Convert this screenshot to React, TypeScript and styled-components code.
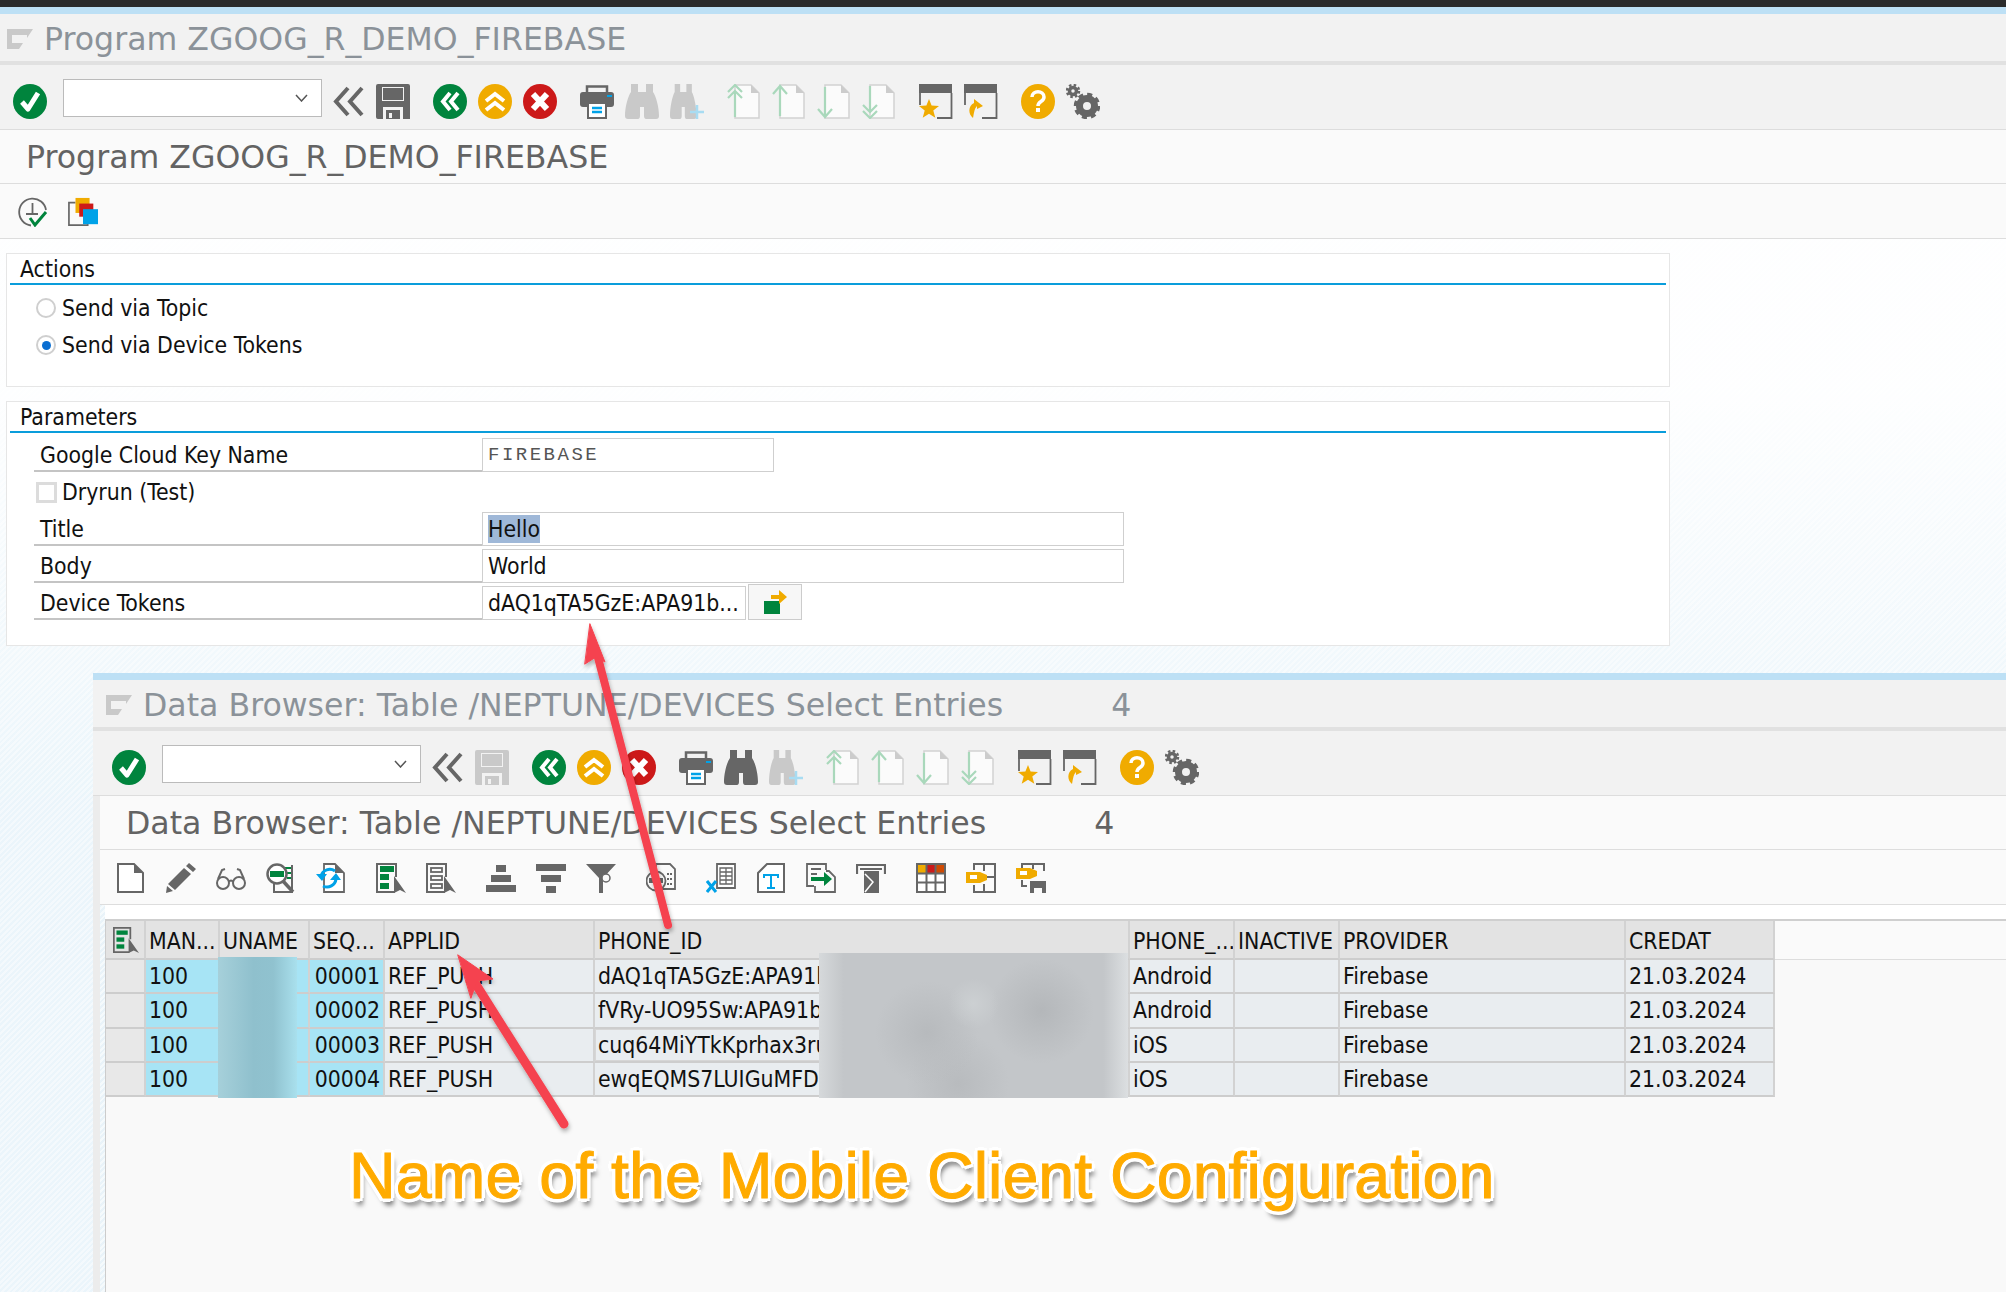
import * as React from 'react'
import styled, { createGlobalStyle } from 'styled-components'

const GRAY = '#666666'
const DISABLED = '#c9c9c9'
const GREEN = '#00843d'
const ORANGE = '#f0ab00'
const RED = '#cc1919'
const BLUE = '#00a2e8'

const GlobalStyle = createGlobalStyle`
  html, body {
    margin: 0;
    padding: 0;
    background: #fff;
  }

  * {
    box-sizing: border-box;
  }
`

const Page = styled.div`
  position: relative;
  display: flex;
  flex-direction: column;
  width: 2006px;
  height: 1292px;
  overflow: hidden;
  font-family: 'DejaVu Sans Condensed', 'DejaVu Sans', sans-serif;
  font-stretch: condensed;
  font-size: 22.8px;
  color: #111;
  background:
    linear-gradient(to bottom, rgba(255, 255, 255, 0.94) 30%, rgba(255, 255, 255, 0.2) 62%),
    repeating-linear-gradient(135deg, #e6f3fa 0 2px, #f1f8fc 2px 4px);
`

const TopBar = styled.div`
  flex: none;
  height: 7px;
  background: #2b2b2b;
`

const HeaderBox = styled.div<{ $indent: number }>`
  flex: none;
  display: flex;
  flex-direction: column;
  border-top: 7px solid #bde0f5;

  .title__row {
    margin-left: ${({ $indent }) => $indent}px;
  }
`

const TitleBar = styled.div<{ $start: number }>`
  display: flex;
  align-items: center;
  height: 51px;
  padding: 2px 0 0 ${({ $start }) => $start}px;
  gap: 11px;
  background: #f2f2f2;
  border-bottom: 4px solid #e1e1e1;
  font-family: 'DejaVu Sans', sans-serif;
  font-stretch: normal;
  font-size: 31.6px;
  color: #8b9299;
  white-space: pre;
`

const TitleIcon = styled.svg`
  flex: none;
  width: 26px;
  height: 20px;
`

const CountText = styled.span<{ $gap: number }>`
  margin-left: ${({ $gap }) => $gap}px;
`

const SystemBar = styled.div<{ $start: number }>`
  display: flex;
  align-items: center;
  height: 65px;
  padding: 2px 0 0 ${({ $start }) => $start}px;
  gap: 23px;
  background: #f2f2f2;
  border-bottom: 1px solid #dddddd;
`

const CommandBox = styled.div`
  display: flex;
  align-items: center;
  justify-content: flex-end;
  width: 259px;
  height: 38px;
  margin: 0 -14px 0 -7px;
  padding-right: 13px;
  background: #fff;
  border: 1px solid #bbbbbb;
`

const ToolGroup = styled.div`
  display: flex;
  align-items: center;
  gap: 11px;
`

const ScreenTitle = styled.div`
  display: flex;
  align-items: center;
  height: 54px;
  padding: 1px 0 0 26px;
  background: #fafafa;
  border-bottom: 1px solid #dddddd;
  font-family: 'DejaVu Sans', sans-serif;
  font-stretch: normal;
  font-size: 31.6px;
  color: #636363;
  white-space: pre;
`

const AppBar = styled.div<{ $gap: number; $start: number }>`
  display: flex;
  align-items: center;
  height: 55px;
  padding: 2px 0 0 ${({ $start }) => $start}px;
  gap: ${({ $gap }) => $gap}px;
  background: #fafafa;
  border-bottom: 1px solid #dddddd;
`

const AppGroup = styled.div`
  display: flex;
  align-items: center;
  gap: 20px;
`

const SysIcon = styled.svg`
  flex: none;
  width: 34px;
  height: 35px;
  margin-top: 7px;
`

const AppIcon = styled.svg<{ $size?: number }>`
  flex: none;
  width: ${({ $size }) => $size ?? 30}px;
  height: ${({ $size }) => $size ?? 30}px;
`

const Selection = styled.div`
  flex: none;
  height: 434px;
  padding: 14px 0 0 6px;
`

const Panel = styled.section<{ $height: number }>`
  width: 1664px;
  height: ${({ $height }) => $height}px;
  margin-bottom: 14px;
  padding: 0 3px;
  background: #fff;
  border: 1px solid #e6e6e6;
`

const PanelHead = styled.div`
  display: flex;
  align-items: center;
  height: 31px;
  padding-left: 10px;
  border-bottom: 2px solid #0a9ddb;
`

const OptionRow = styled.div`
  display: flex;
  align-items: center;
  gap: 6px;
  height: 37px;
  padding: 1px 0 0 26px;
`

const OptionList = styled.div`
  padding-top: 4px;
`

const Radio = styled.span<{ $on?: boolean }>`
  display: flex;
  align-items: center;
  justify-content: center;
  width: 20px;
  height: 20px;
  border: 2px solid #cfcfcf;
  border-radius: 50%;
  background: #fff;

  &::after {
    content: '';
    display: ${({ $on }) => ($on ? 'block' : 'none')};
    width: 9px;
    height: 9px;
    border-radius: 50%;
    background: #0a6ed1;
  }
`

const Checkbox = styled.span`
  width: 21px;
  height: 21px;
  margin-right: -1px;
  border: 3px solid #dcdcdc;
  background: #fff;
`

const ParamList = styled.div`
  padding-top: 3px;
`

const ParamRow = styled.div`
  display: flex;
  height: 37px;
  padding-left: 24px;
`

const ParamLabel = styled.div`
  display: flex;
  align-items: center;
  width: 448px;
  height: 36px;
  padding: 4px 0 0 6px;
  border-bottom: 2px solid #c4c4c4;
`

const ParamField = styled.div<{ $width: number; $frozen?: boolean }>`
  display: flex;
  align-items: center;
  width: ${({ $width }) => $width}px;
  height: 34px;
  margin-top: 2px;
  padding-left: 5px;
  background: #fff;
  border: 1px solid #cfcfcf;
  overflow: hidden;
  white-space: nowrap;
  font-family: ${({ $frozen }) => ($frozen ? "'Liberation Mono', monospace" : 'inherit')};
  font-size: ${({ $frozen }) => ($frozen ? '19px' : '22.8px')};
  letter-spacing: ${({ $frozen }) => ($frozen ? '2.5px' : '0')};
  color: ${({ $frozen }) => ($frozen ? '#555' : '#111')};
`

const Selected = styled.span`
  padding: 1px 0;
  background: #9fb8d8;
`

const PickerButton = styled.div`
  display: flex;
  align-items: center;
  justify-content: center;
  width: 54px;
  height: 36px;
  margin-left: 2px;
  background: #f7f7f7;
  border: 1px solid #cccccc;
`

const Browser = styled.div`
  flex: 1;
  display: flex;
  flex-direction: column;
  margin-left: 93px;
  background: #ececec;
`

const BrowserBody = styled.div`
  flex: 1;
  display: flex;
  flex-direction: column;
  margin-left: 7px;
  padding-left: 5px;
  background: repeating-linear-gradient(135deg, #e9f3f9 0 2px, #f5fafc 2px 4px);
`

const ListArea = styled.div`
  position: relative;
  flex: 1;
  background: #f9f9f9;
  border-left: 1px solid #cccccc;
`

const Spacer = styled.div`
  height: 16px;
  background: #fff;
  border-bottom: 2px solid #cfcfcf;
  margin-left: -1px;
`

const Grid = styled.div`
  display: grid;
  grid-template-columns: 40px 74px 90px 75px 210px 535px 105px 105px 286px 149px 1fr;
  grid-template-rows: 39px repeat(4, 34.25px);
`

const CELL_COLORS = {
  head: '#e3e3e3',
  corner: '#e3e3e3',
  selector: '#e8e8e8',
  key: '#a7e4f5',
  data: '#e9edf0',
}

const Cell = styled.div<{ $kind: keyof typeof CELL_COLORS; $end?: boolean; $focus?: boolean }>`
  display: flex;
  align-items: center;
  justify-content: ${({ $end }) => ($end ? 'flex-end' : 'flex-start')};
  padding: ${({ $kind }) => ($kind === 'head' ? '3px' : '0')} ${({ $end }) => ($end ? '3px' : '0')} 0
    ${({ $end }) => ($end ? '0' : '3px')};
  overflow: hidden;
  white-space: nowrap;
  background: ${({ $kind }) => CELL_COLORS[$kind]};
  border-right: 2px solid #d2d2d2;
  border-bottom: 2px solid #cdcdcd;
  box-shadow: ${({ $focus }) => ($focus ? 'inset 0 0 0 1px #d6d6d6' : 'none')};
`

const HeadFiller = styled.div`
  border-bottom: 1px solid #dddddd;
  background: #fafafa;
`

const CornerIcon = styled.div`
  display: flex;
  justify-content: center;
  width: 100%;
  margin-left: -1px;
`

const BlurPatch = styled.div<{ $left: number; $top: number; $width: number; $height: number; $bg: string }>`
  position: absolute;
  left: ${({ $left }) => $left}px;
  top: ${({ $top }) => $top}px;
  width: ${({ $width }) => $width}px;
  height: ${({ $height }) => $height}px;
  background: ${({ $bg }) => $bg};
`

const Callout = styled.div`
  position: absolute;
  left: 349px;
  top: 1139px;
  font-family: 'Liberation Sans', Arial, sans-serif;
  font-stretch: normal;
  font-size: 64.6px;
  line-height: 74px;
  white-space: nowrap;
  color: #ffab00;
  -webkit-text-stroke: 1px #ffab00;
  text-shadow:
    4px 0 0 #fff, -4px 0 0 #fff, 0 4px 0 #fff, 0 -4px 0 #fff,
    3px 3px 0 #fff, -3px 3px 0 #fff, 3px -3px 0 #fff, -3px -3px 0 #fff,
    3px 7px 5px rgba(0, 0, 0, 0.55);
`

const ArrowLayer = styled.svg`
  position: absolute;
  left: 0;
  top: 0;
  width: 2006px;
  height: 1292px;
  pointer-events: none;
`

const Check = () => (
  <SysIcon viewBox="0 0 34 35">
    <ellipse cx="17" cy="17.5" rx="17" ry="17.5" fill={GREEN} />
    <path d="M9 18l6 7L25 9" fill="none" stroke="#fff" strokeWidth="5" strokeLinejoin="round" />
  </SysIcon>
)

const BackLines = () => (
  <SysIcon viewBox="0 0 34 35">
    <path d="M17 4L5 17.5 17 31M31 4L19 17.5 31 31" fill="none" stroke={GRAY} strokeWidth="4" />
  </SysIcon>
)

const Save = ({ off }: { off?: boolean }) => (
  <SysIcon viewBox="0 0 34 35">
    <path
      d="M0 2a2 2 0 012-2h30a2 2 0 012 2v33h-7V23H7v12H2a2 2 0 01-2-2zM6 3v14h22V3zM10 26h14v9H10zM13 29v5h3v-5z"
      fill={off ? DISABLED : GRAY}
      fillRule="evenodd"
    />
    <rect x="7" y="4" width="20" height="12" fill={off ? DISABLED : GRAY} />
  </SysIcon>
)

const Dot = ({ color, children }: { color: string; children: React.ReactNode }) => (
  <SysIcon viewBox="0 0 34 35">
    <ellipse cx="17" cy="17.5" rx="17" ry="17.5" fill={color} />
    {children}
  </SysIcon>
)

const Printer = () => (
  <SysIcon viewBox="0 0 34 35">
    <path d="M7 9V2.5h20V9" fill="none" stroke={GRAY} strokeWidth="2.5" />
    <rect x="0" y="8" width="34" height="15" rx="3" fill={GRAY} />
    <rect x="27" y="11" width="5" height="2" fill={BLUE} />
    <rect x="8" y="19" width="18" height="15" fill="#fff" stroke={GRAY} strokeWidth="2" />
    <path d="M12 24h10M12 28h10" stroke={BLUE} strokeWidth="2.5" />
  </SysIcon>
)

const BINOCULAR =
  'M6 0h7v8h8V0h7v8c3 4 6 15 6 24 0 2-1 3-3 3H21c-1 0-2-1-2-3v-9h-4v9c0 2-1 3-2 3H3c-2 0-3-1-3-3 0-9 3-20 6-24z'

const Binoculars = ({ off }: { off?: boolean }) => (
  <SysIcon viewBox="0 0 34 35">
    <path d={BINOCULAR} fill={off ? DISABLED : GRAY} />
  </SysIcon>
)

const BinocularsPlus = () => (
  <SysIcon viewBox="0 0 34 35">
    <path d={BINOCULAR} fill={DISABLED} transform="scale(0.78 1)" />
    <path d="M20 28h14M27 21v14" stroke="#a8dcf2" strokeWidth="2.5" />
  </SysIcon>
)

const PageMove = ({ kind }: { kind: 'first' | 'prev' | 'next' | 'last' }) => (
  <SysIcon viewBox="0 0 34 35">
    <path d="M8 1h16l8 8v25H8z" fill="#fbfbfb" stroke="#d2d2d2" strokeWidth="1.5" />
    <path d="M24 1l8 8h-8z" fill="#cccccc" />
    {kind === 'first' && (
      <path d="M8 33V8M1 14l7-7 7 7M1 8l7-7 7 7" fill="none" stroke="#a9d8bb" strokeWidth="2.2" />
    )}
    {kind === 'prev' && <path d="M8 32V3M1 10l7-8 7 8" fill="none" stroke="#a9d8bb" strokeWidth="2.2" />}
    {kind === 'next' && <path d="M8 3v29M1 25l7 8 7-8" fill="none" stroke="#a9d8bb" strokeWidth="2.2" />}
    {kind === 'last' && (
      <path d="M8 2v25M1 21l7 7 7-7M1 27l7 7 7-7" fill="none" stroke="#a9d8bb" strokeWidth="2.2" />
    )}
  </SysIcon>
)

const WindowFrame = ({ children }: { children: React.ReactNode }) => (
  <SysIcon viewBox="0 0 34 35">
    <rect x="0" y="0" width="33" height="9" fill={GRAY} />
    <path d="M1 9v12M32.5 9v25H18" fill="none" stroke={GRAY} strokeWidth="1.8" />
    {children}
  </SysIcon>
)

const Gears = () => (
  <SysIcon viewBox="0 0 34 35">
    <circle cx="21" cy="22" r="7.5" fill="none" stroke={GRAY} strokeWidth="7" />
    <circle cx="21" cy="22" r="11.5" fill="none" stroke={GRAY} strokeWidth="3.5" strokeDasharray="5 4" />
    <circle cx="7" cy="7" r="3.5" fill="none" stroke={GRAY} strokeWidth="3.5" />
    <circle cx="7" cy="7" r="6" fill="none" stroke={GRAY} strokeWidth="2.5" strokeDasharray="2.5 2.2" />
  </SysIcon>
)

const FlagIcon = () => (
  <TitleIcon viewBox="0 0 26 20">
    <path d="M0 0h26l-6 9H20V6H5v8h11l-4 6H0z" fill="#c9c9c9" />
  </TitleIcon>
)

const ExecuteIcon = () => (
  <AppIcon viewBox="0 0 30 30">
    <path d="M13 28.5A13.5 13.5 0 1 1 28 13" fill="none" stroke={GRAY} strokeWidth="1.8" />
    <path d="M14.5 6v11M8 17h12" stroke={GRAY} strokeWidth="1.8" />
    <path d="M12 21l5 7 11-13" fill="none" stroke={GREEN} strokeWidth="3" />
  </AppIcon>
)

const VariantIcon = () => (
  <AppIcon viewBox="0 0 32 30">
    <path d="M8 5H1v24h20v-2" fill="none" stroke={GRAY} strokeWidth="1.8" />
    <rect x="8" y="0" width="15" height="16" fill={ORANGE} />
    <rect x="12" y="6" width="15" height="14" fill={RED} />
    <rect x="16" y="12" width="16" height="16" fill={BLUE} />
  </AppIcon>
)

const PagePath = 'M2 1h16l9 9v19H2z'

const NewDoc = () => (
  <AppIcon viewBox="0 0 30 30">
    <path d={PagePath} fill="#fff" stroke={GRAY} strokeWidth="2" />
    <path d="M18 1l9 9h-9z" fill={GRAY} />
  </AppIcon>
)

const Pencil = () => (
  <AppIcon viewBox="0 0 30 30">
    <path d="M23 0l7 6-3 3-7-6zM18 5l7 6L9 27l-7-6zM1 23l6 5-7 2z" fill={GRAY} />
  </AppIcon>
)

const Glasses = () => (
  <AppIcon viewBox="0 0 30 30">
    <g fill="none" stroke={GRAY} strokeWidth="2">
      <circle cx="7" cy="20" r="6" />
      <circle cx="23" cy="20" r="6" />
      <path d="M13 19c1-2 3-2 4 0M2 16l4-9 3-1M28 16l-4-9-3-1" />
    </g>
  </AppIcon>
)

const ZoomDoc = () => (
  <AppIcon viewBox="0 0 30 30">
    <path d="M8 18v11h18V2" fill="none" stroke={GRAY} strokeWidth="2" />
    <path d="M19 5h6M21 10h4M21 15h4" stroke={GREEN} strokeWidth="2" />
    <circle cx="11" cy="11" r="9.5" fill="#fff" stroke={GRAY} strokeWidth="2.5" />
    <rect x="4" y="8" width="14" height="6" fill={GREEN} />
    <path d="M17 18l10 11" stroke={GRAY} strokeWidth="3.5" />
  </AppIcon>
)

const RefreshDoc = () => (
  <AppIcon viewBox="0 0 30 30">
    <path d="M8 1h11l9 9v19H8z" fill="#fff" stroke={GRAY} strokeWidth="1.8" />
    <path d="M19 1l9 9h-9z" fill={GRAY} />
    <path d="M5 13a9 9 0 0 1 14-5M20 16a9 9 0 0 1-13 7" fill="none" stroke={BLUE} strokeWidth="3" />
    <path d="M0 11h11l-5 7zM14 17h11l-5-7z" fill={BLUE} />
  </AppIcon>
)

const Layout = ({ filled }: { filled?: boolean }) => (
  <AppIcon viewBox="0 0 30 30">
    <path d="M19 29H1V1h19v13" fill="none" stroke={GRAY} strokeWidth="2" />
    {filled ? (
      <>
        <rect x="4" y="3" width="14" height="6" fill={GREEN} />
        <rect x="4" y="11" width="9" height="6" fill={GREEN} />
        <rect x="4" y="20" width="9" height="6" fill={GREEN} />
      </>
    ) : (
      <g fill="none" stroke={GRAY} strokeWidth="1.8">
        <rect x="5" y="5" width="11" height="4" />
        <rect x="5" y="13" width="11" height="4" />
        <rect x="5" y="21" width="11" height="4" />
      </g>
    )}
    <path d="M18 13l12 17-6-3-6 3z" fill={GRAY} />
  </AppIcon>
)

const SortUp = () => (
  <AppIcon viewBox="0 0 30 30">
    <path d="M10 2h10v7H10zM5 12h20v7H5zM0 22h30v7H0z" fill={GRAY} />
  </AppIcon>
)

const SortDown = () => (
  <AppIcon viewBox="0 0 30 30">
    <path d="M0 1h30v7H0zM5 12h20v7H5zM10 23h10v7H10z" fill={GRAY} />
  </AppIcon>
)

const Funnel = () => (
  <AppIcon viewBox="0 0 30 30">
    <path d="M0 1h30L17 15v15h-4V15z" fill={GRAY} />
    <circle cx="20" cy="15" r="4" fill="#fafafa" stroke={GRAY} strokeWidth="1.5" />
  </AppIcon>
)

const SumDoc = () => (
  <AppIcon viewBox="0 0 30 30">
    <path d="M10 6V1h14l5 5v20H16" fill="none" stroke={GRAY} strokeWidth="1.8" />
    <path d="M21 11h5M21 16h5M21 21h5" stroke={GRAY} strokeWidth="2" strokeDasharray="2 1" />
    <circle cx="10" cy="18" r="9.5" fill="#fafafa" stroke={GRAY} strokeWidth="1.8" />
    <rect x="3" y="15" width="14" height="5" fill={GRAY} />
  </AppIcon>
)

const ExcelDoc = () => (
  <AppIcon viewBox="0 0 30 30">
    <path d="M11 1h18v24H11z" fill="#fff" stroke={GRAY} strokeWidth="1.8" />
    <path d="M14 5h12v16H14zM14 9h12M14 13h12M14 17h12M20 5v16" fill="none" stroke={GRAY} strokeWidth="1.3" />
    <path d="M1 18l9 11M10 18L1 29" stroke={BLUE} strokeWidth="3" />
  </AppIcon>
)

const TextDoc = () => (
  <AppIcon viewBox="0 0 30 30">
    <path d="M11 1h17v28H2V10z" fill="#fff" stroke={GRAY} strokeWidth="2" />
    <path d="M8 15v-3h14v3M15 12v13M11 25h8" fill="none" stroke={BLUE} strokeWidth="2" />
  </AppIcon>
)

const ExportDoc = () => (
  <AppIcon viewBox="0 0 30 30">
    <path d="M8 23H1V1h19v6" fill="none" stroke={GRAY} strokeWidth="1.8" />
    <path d="M5 6h10M5 11h6" stroke={GRAY} strokeWidth="1.8" />
    <path d="M20 8h3l6 6v15H9v-6" fill="none" stroke={GRAY} strokeWidth="1.8" />
    <path d="M5 14h13V9l8 7-8 7v-5H5z" fill={GREEN} />
  </AppIcon>
)

const PrintPreview = () => (
  <AppIcon viewBox="0 0 30 30">
    <path d="M1 11V2h28v9M4 6h22" fill="none" stroke={GRAY} strokeWidth="2.2" />
    <path d="M8 8h15v22H8z" fill={GRAY} />
    <path d="M9 11l8 8-8 10" fill="none" stroke="#fff" strokeWidth="1.5" />
  </AppIcon>
)

const GridIcon = () => (
  <AppIcon viewBox="0 0 30 30">
    <rect x="1" y="1" width="28" height="28" fill="#fff" stroke={GRAY} strokeWidth="2" />
    <rect x="2" y="2" width="8" height="8" fill={ORANGE} />
    <rect x="11" y="2" width="8" height="8" fill={RED} />
    <rect x="20" y="2" width="8" height="8" fill="#d04a02" />
    <path d="M1 10.5h28M1 19.5h28M10.5 1v28M19.5 1v28" stroke={GRAY} strokeWidth="2" />
  </AppIcon>
)

const KeyTag = () => (
  <>
    <path d="M0 9h14l7 3v5l-7 3H0z" fill={ORANGE} />
    <rect x="4" y="12" width="7" height="4" fill="#fff" />
  </>
)

const KeyTable = () => (
  <AppIcon viewBox="0 0 30 30">
    <path d="M8 7V1h21v28H8v-7M18 1v7M18 21v8M20 14h9" fill="none" stroke={GRAY} strokeWidth="2" />
    <KeyTag />
  </AppIcon>
)

const KeySave = () => (
  <AppIcon viewBox="0 0 30 30">
    <path d="M6 5V1h22v7M17 1v5M6 17v6h5" fill="none" stroke={GRAY} strokeWidth="2" />
    <g transform="translate(0 -4)">
      <KeyTag />
    </g>
    <path d="M14 18h16v12H14z" fill={GRAY} />
    <rect x="18" y="25" width="8" height="5" fill="#fafafa" />
  </AppIcon>
)

const SystemToolbar = ({ start, saveOff, findOff }: { start: number; saveOff?: boolean; findOff?: boolean }) => (
  <SystemBar $start={start}>
    <Check />
    <CommandBox>
      <svg width="13" height="8" viewBox="0 0 13 8">
        <path d="M1 1l5.5 6L12 1" fill="none" stroke="#555" strokeWidth="1.5" />
      </svg>
    </CommandBox>
    <ToolGroup>
      <BackLines />
      <Save off={saveOff} />
    </ToolGroup>
    <ToolGroup>
      <Dot color={GREEN}>
        <path d="M17 9l-7 8.5 7 8.5M25 9l-7 8.5 7 8.5" fill="none" stroke="#fff" strokeWidth="4" />
      </Dot>
      <Dot color={ORANGE}>
        <path d="M8 17l9-7 9 7M8 26l9-7 9 7" fill="none" stroke="#fff" strokeWidth="4" />
      </Dot>
      <Dot color={RED}>
        <path d="M10 10l14 15M24 10L10 25" fill="none" stroke="#fff" strokeWidth="6" />
      </Dot>
    </ToolGroup>
    <ToolGroup>
      <Printer />
      <Binoculars off={findOff} />
      <BinocularsPlus />
    </ToolGroup>
    <ToolGroup>
      <PageMove kind="first" />
      <PageMove kind="prev" />
      <PageMove kind="next" />
      <PageMove kind="last" />
    </ToolGroup>
    <ToolGroup>
      <WindowFrame>
        <path d="M10 15l2.6 6.6 7.4.4-5.7 4.6 2 7.2-6.3-4-6.3 4 2-7.2L0 22l7.4-.4z" fill={ORANGE} />
      </WindowFrame>
      <WindowFrame>
        <path d="M9 34c-5-4-5-12 1-15v-4l9 7-6 3v-3c-3 3-3 8-4 12z" fill={ORANGE} />
      </WindowFrame>
    </ToolGroup>
    <ToolGroup>
      <Dot color={ORANGE}>
        <path d="M11 13c0-7 12-7 12 0 0 5-6 4-6 9" fill="none" stroke="#fff" strokeWidth="3.5" />
        <rect x="15" y="24" width="4" height="4" fill="#fff" />
      </Dot>
      <Gears />
    </ToolGroup>
  </SystemBar>
)

type HeaderProps = {
  title: string
  count?: string
  indent: number
  barStart: number
  toolStart: number
  saveOff?: boolean
  findOff?: boolean
  gap: number
  start: number
  children: React.ReactNode
}

const WindowHeader: React.FC<HeaderProps> = ({
  title,
  count,
  indent,
  barStart,
  toolStart,
  saveOff,
  findOff,
  gap,
  start,
  children,
}) => (
  <HeaderBox $indent={indent}>
    <TitleBar $start={barStart}>
      <FlagIcon />
      {title}
      {count && <CountText $gap={97}>{count}</CountText>}
    </TitleBar>
    <SystemToolbar start={toolStart} saveOff={saveOff} findOff={findOff} />
    <div className="title__row">
      <ScreenTitle>
        {title}
        {count && <CountText $gap={108}>{count}</CountText>}
      </ScreenTitle>
      <AppBar $gap={gap} $start={start}>
        {children}
      </AppBar>
    </div>
  </HeaderBox>
)

const COLUMNS = ['MAN...', 'UNAME', 'SEQ...', 'APPLID', 'PHONE_ID', 'PHONE_...', 'INACTIVE', 'PROVIDER', 'CREDAT']

const ROWS = [
  { seq: '00001', token: 'dAQ1qTA5GzE:APA91b', os: 'Android' },
  { seq: '00002', token: 'fVRy-UO95Sw:APA91b', os: 'Android' },
  { seq: '00003', token: 'cuq64MiYTkKprhax3ru', os: 'iOS' },
  { seq: '00004', token: 'ewqEQMS7LUIGuMFD', os: 'iOS' },
]

const DeviceGrid = () => (
  <Grid>
    <Cell $kind="corner">
      <CornerIcon>
        <AppIcon $size={26} viewBox="0 0 30 30">
          <path d="M19 29H1V1h19v13" fill="none" stroke={GRAY} strokeWidth="2" />
          <rect x="4" y="4" width="13" height="5" fill={GREEN} />
          <rect x="4" y="12" width="9" height="5" fill={GREEN} />
          <rect x="4" y="20" width="9" height="5" fill={GREEN} />
          <path d="M18 13l12 17-6-3-6 3z" fill={GRAY} />
        </AppIcon>
      </CornerIcon>
    </Cell>
    {COLUMNS.map((name) => (
      <Cell $kind="head" key={name}>
        {name}
      </Cell>
    ))}
    <HeadFiller />
    {ROWS.map((row) => (
      <React.Fragment key={row.seq}>
        <Cell $kind="selector" />
        <Cell $kind="key">100</Cell>
        <Cell $kind="key" />
        <Cell $kind="key" $end>
          {row.seq}
        </Cell>
        <Cell $kind="data">REF_PUSH</Cell>
        <Cell $kind="data" $focus={row.seq === '00003'}>
          {row.token}
        </Cell>
        <Cell $kind="data">{row.os}</Cell>
        <Cell $kind="data" />
        <Cell $kind="data">Firebase</Cell>
        <Cell $kind="data">21.03.2024</Cell>
        <div />
      </React.Fragment>
    ))}
  </Grid>
)

const App = () => {
  return (
    <Page>
      <GlobalStyle />
      <TopBar />
      <WindowHeader
        title="Program ZGOOG_R_DEMO_FIREBASE"
        indent={0}
        barStart={7}
        toolStart={13}
        findOff
        gap={20}
        start={18}
      >
        <ExecuteIcon />
        <VariantIcon />
      </WindowHeader>

      <Selection>
        <Panel $height={134}>
          <PanelHead>Actions</PanelHead>
          <OptionList>
            <OptionRow>
              <Radio />
              Send via Topic
            </OptionRow>
            <OptionRow>
              <Radio $on />
              Send via Device Tokens
            </OptionRow>
          </OptionList>
        </Panel>
        <Panel $height={245}>
          <PanelHead>Parameters</PanelHead>
          <ParamList>
            <ParamRow>
              <ParamLabel>Google Cloud Key Name</ParamLabel>
              <ParamField $width={292} $frozen>
                FIREBASE
              </ParamField>
            </ParamRow>
            <OptionRow>
              <Checkbox />
              Dryrun (Test)
            </OptionRow>
            <ParamRow>
              <ParamLabel>Title</ParamLabel>
              <ParamField $width={642}>
                <Selected>Hello</Selected>
              </ParamField>
            </ParamRow>
            <ParamRow>
              <ParamLabel>Body</ParamLabel>
              <ParamField $width={642}>World</ParamField>
            </ParamRow>
            <ParamRow>
              <ParamLabel>Device Tokens</ParamLabel>
              <ParamField $width={264}>dAQ1qTA5GzE:APA91b...</ParamField>
              <PickerButton>
                <svg width="24" height="24" viewBox="0 0 24 24">
                  <rect x="1" y="11" width="16" height="13" fill={GREEN} />
                  <path d="M8 5h8V0l8 7-8 7V9H8z" fill={ORANGE} />
                </svg>
              </PickerButton>
            </ParamRow>
          </ParamList>
        </Panel>
      </Selection>

      <Browser>
        <WindowHeader
          title="Data Browser: Table /NEPTUNE/DEVICES Select Entries"
          count="4"
          indent={7}
          barStart={13}
          toolStart={19}
          saveOff
          gap={30}
          start={16}
        >
          <AppGroup>
            <NewDoc />
            <Pencil />
            <Glasses />
            <ZoomDoc />
            <RefreshDoc />
          </AppGroup>
          <AppGroup>
            <Layout filled />
            <Layout />
          </AppGroup>
          <AppGroup>
            <SortUp />
            <SortDown />
            <Funnel />
          </AppGroup>
          <SumDoc />
          <AppGroup>
            <ExcelDoc />
            <TextDoc />
            <ExportDoc />
            <PrintPreview />
          </AppGroup>
          <AppGroup>
            <GridIcon />
            <KeyTable />
            <KeySave />
          </AppGroup>
        </WindowHeader>
        <BrowserBody>
          <ListArea>
            <Spacer />
            <DeviceGrid />
          </ListArea>
        </BrowserBody>
      </Browser>

      <BlurPatch
        $left={218}
        $top={957}
        $width={79}
        $height={141}
        $bg="linear-gradient(90deg, #a6d0da 0%, #8fc0cd 45%, #90c2cf 70%, #a9e0ed 100%)"
      />
      <BlurPatch
        $left={819}
        $top={953}
        $width={309}
        $height={145}
        $bg="radial-gradient(circle at 50% 35%, rgba(208, 212, 214, 0.7) 0, rgba(208, 212, 214, 0) 14%), radial-gradient(circle at 72% 40%, #b4b7ba 0, rgba(180, 183, 186, 0) 22%), radial-gradient(circle at 35% 55%, #b7babd 0, rgba(183, 186, 189, 0) 24%), radial-gradient(circle at 45% 90%, #b8bbbe 0, rgba(184, 187, 190, 0) 24%), linear-gradient(90deg, #d6d9db 0%, #c3c6c9 8%, #c3c6c9 92%, #dcdfe1 100%)"
      />

      <Callout>Name of the Mobile Client Configuration</Callout>

      <ArrowLayer viewBox="0 0 2006 1292">
        <defs>
          <filter id="arrowShadow" x="-20%" y="-20%" width="140%" height="140%">
            <feDropShadow dx="1" dy="3" stdDeviation="2" floodColor="#000" floodOpacity="0.3" />
          </filter>
        </defs>
        <g filter="url(#arrowShadow)" fill="#f5434f" stroke="#f5434f" strokeLinecap="round">
          <path d="M668 925L596 650" strokeWidth="8" fill="none" />
          <path d="M590 624L605 662 596 657 585 664z" strokeWidth="1" />
          <path d="M564 1124L470 975" strokeWidth="9" fill="none" />
          <path d="M458 955L493 979 477 981 471 998z" strokeWidth="1" />
        </g>
      </ArrowLayer>
    </Page>
  )
}

export default App
